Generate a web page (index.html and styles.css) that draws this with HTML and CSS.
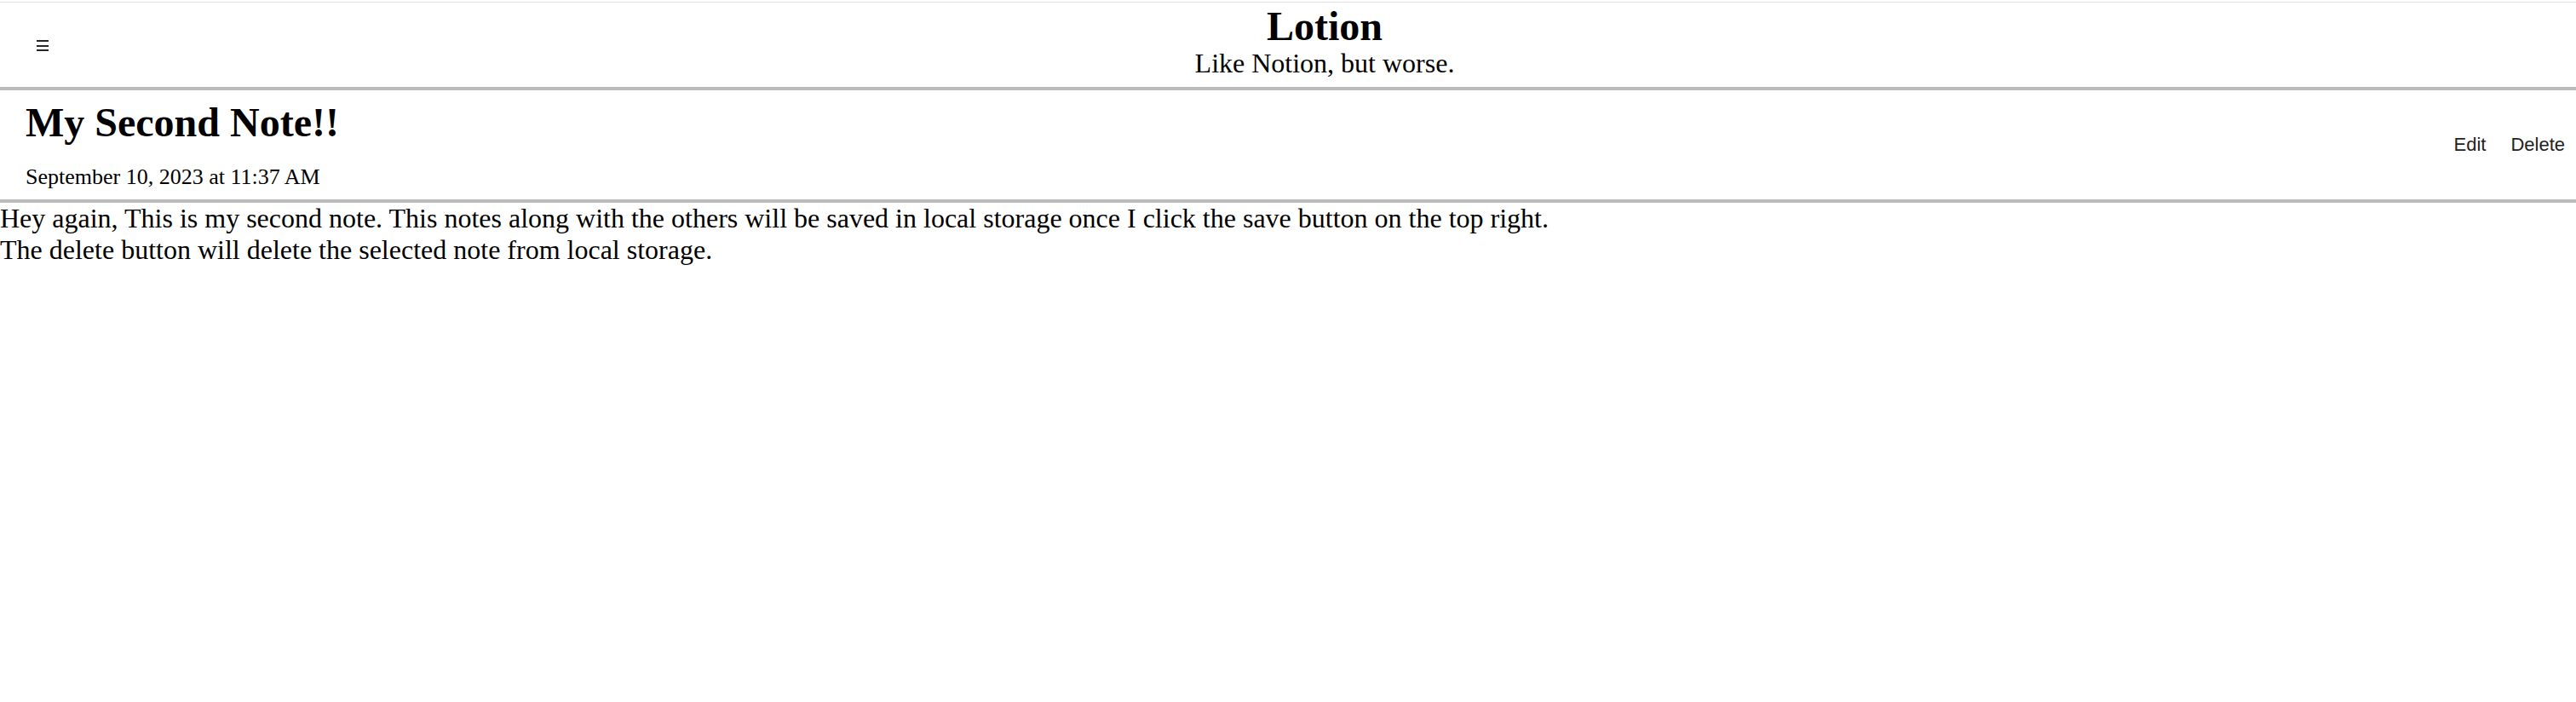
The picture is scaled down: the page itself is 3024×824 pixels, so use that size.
FILE: index.html
```html
<!DOCTYPE html>
<html lang="en">
<head>
<meta charset="utf-8">
<title>Lotion</title>
<link rel="stylesheet" href="styles.css">
</head>
<body>
<div class="app">
  <header class="top">
    <button class="menu" aria-label="Menu">
      <svg width="14" height="14" viewBox="0 0 14 14"><rect x="0" y="1" width="14" height="2" fill="#262626"/><rect x="0" y="7" width="14" height="2" fill="#262626"/><rect x="0" y="12" width="14" height="2" fill="#262626"/></svg>
    </button>
    <div class="brand">
      <h1 class="brand-title">Lotion</h1>
      <p class="brand-sub">Like Notion, but worse.</p>
    </div>
  </header>
  <section class="note-head">
    <div class="note-info">
      <h2 class="note-title">My Second Note!!</h2>
      <div class="note-date">September 10, 2023 at 11:37 AM</div>
    </div>
    <div class="note-actions">
      <button class="action">Edit</button>
      <button class="action">Delete</button>
    </div>
  </section>
  <div class="note-body">Hey again, This is my second note. This notes along with the others will be saved in local storage once I click the save button on the top right.<br>The delete button will delete the selected note from local storage.</div>
</div>
</body>
</html>
```
FILE: styles.css
```css
html, body {
  margin: 0;
  padding: 0;
  background: #fff;
}
body {
  font-family: "Liberation Serif", "Times New Roman", serif;
  color: #000;
}
.app {
  padding-top: 2px;
}
.top {
  display: flex;
  align-items: center;
  border-top: 1px solid #dedede;
  border-bottom: 4px solid #bbbbbb;
  height: 99px;
  box-sizing: content-box;
}
.menu {
  flex: none;
  background: none;
  border: 0;
  margin: 0;
  padding: 0 29px 0 43px;
  height: 14px;
  display: flex;
  align-items: center;
  cursor: pointer;
}
.menu svg {
  display: block;
}
.brand {
  flex: 1;
  text-align: center;
  align-self: flex-start;
}
.brand-title {
  margin: 0;
  font-size: 48px;
  font-weight: bold;
  line-height: 55px;
}
.brand-sub {
  margin: 0;
  font-size: 32px;
  line-height: 32px;
}
.note-head {
  display: flex;
  align-items: center;
  justify-content: space-between;
  height: 128px;
  border-bottom: 4px solid #bbbbbb;
  padding: 0 13px 0 30px;
}
.note-info {
  align-self: flex-start;
  padding-top: 10px;
}
.note-title {
  margin: 0 0 22px;
  font-size: 48px;
  font-weight: bold;
  line-height: 55px;
}
.note-date {
  font-size: 26px;
  line-height: 30px;
}
.note-actions {
  display: flex;
  gap: 29px;
}
.action {
  background: none;
  border: 0;
  margin: 0;
  padding: 0;
  font-family: "Liberation Sans", Arial, sans-serif;
  font-size: 22px;
  color: #222;
  cursor: pointer;
}
.note-body {
  font-size: 32px;
  line-height: normal;
  margin: 0;
}
```
